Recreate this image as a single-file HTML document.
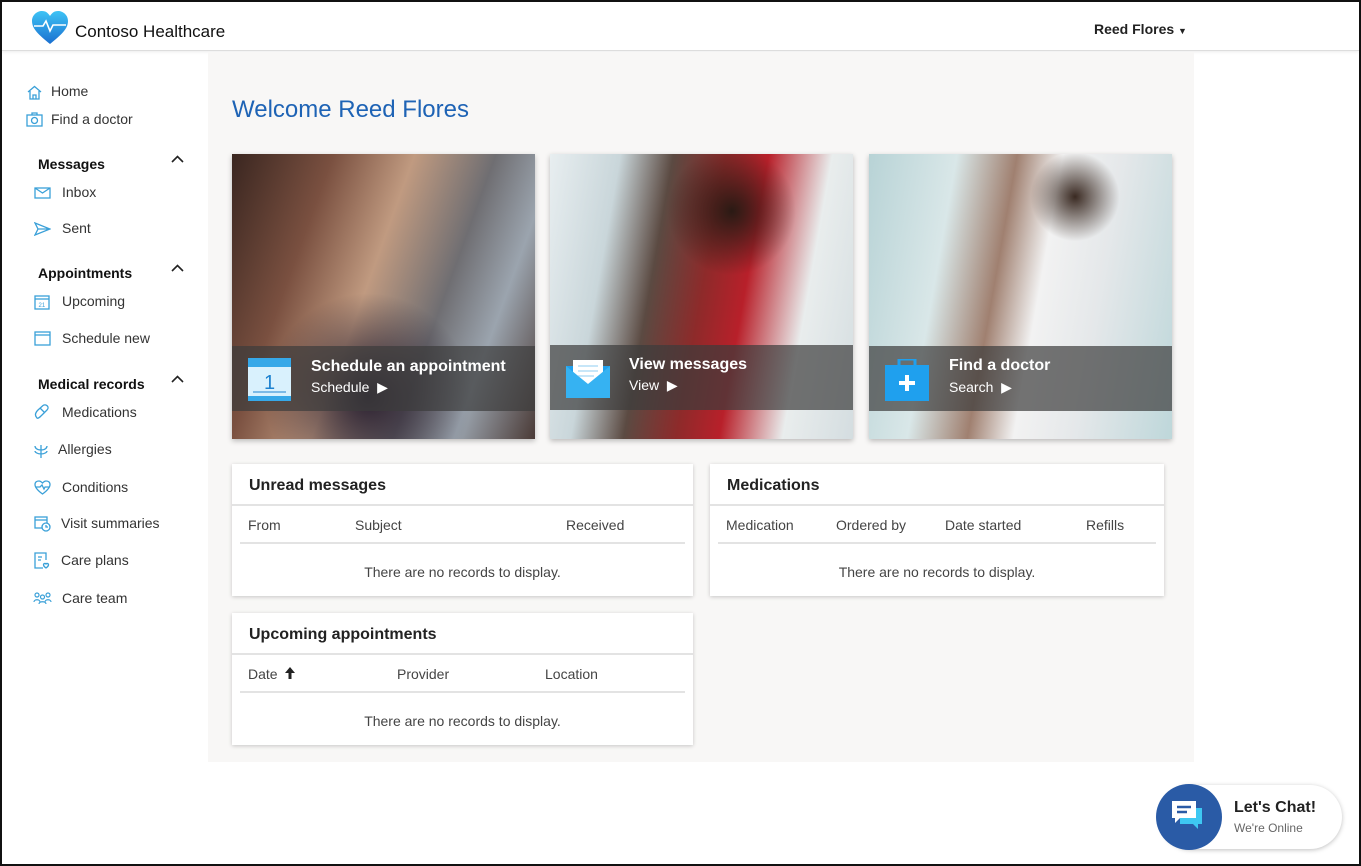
<!DOCTYPE html><html><head><meta charset="utf-8"><style>
*{box-sizing:border-box;margin:0;padding:0}
body{width:1361px;height:866px;overflow:hidden;background:#fff;font-family:"Liberation Sans",sans-serif;color:#222;position:relative}
.frame{position:absolute;inset:0;border:2px solid #111;pointer-events:none;z-index:9}
.hdr{position:absolute;left:2px;top:2px;right:2px;height:49px;border-bottom:1px solid #ddd;box-shadow:0 1px 3px rgba(0,0,0,.08)}
.logo{position:absolute;left:73px;top:20px;font-size:17px;color:#111}
.user{position:absolute;left:1092px;top:19px;font-size:14px;font-weight:bold;color:#222}
.main{position:absolute;left:208px;top:52px;width:986px;height:710px;background:#f8f7f6}
.nav{position:absolute;font-size:14px;color:#333}
.nav.h{font-weight:bold;color:#111}
.ic{position:absolute}
h1{position:absolute;left:232px;top:96px;font-size:24px;font-weight:normal;color:#1e63b5}
.tile{position:absolute;top:154px;width:303px;height:285px;box-shadow:0 2px 5px rgba(0,0,0,.25);overflow:hidden}
.ov{position:absolute;left:0;right:0;top:192px;height:65px;background:rgba(60,60,60,.7)}
.tt{position:absolute;color:#fff;font-size:16px;font-weight:bold}
.ts{position:absolute;color:#fff;font-size:14px}
.card{position:absolute;background:#fff;box-shadow:0 1px 4px rgba(0,0,0,.2)}
.card .t{position:absolute;left:17px;top:13px;font-size:16px;font-weight:bold;color:#222}
.card .l1{position:absolute;left:0;right:0;top:40px;border-top:2px solid #e3e3e3}
.card .l2{position:absolute;left:8px;right:8px;top:78px;border-top:2px solid #e3e3e3}
.card .c{position:absolute;top:53px;font-size:14px;color:#444}
.card .e{position:absolute;left:0;right:0;top:100px;text-align:center;font-size:14px;color:#444}
.car{position:absolute;left:171px}
</style></head><body>
<div class="frame"></div>
<div class="hdr">
<svg class="ic" style="left:29px;top:9px" width="38" height="34" viewBox="0 0 38 34"><defs><linearGradient id="g" x1="0" y1="0" x2="0" y2="1"><stop offset="0" stop-color="#3ec3f5"/><stop offset="1" stop-color="#1a6fd0"/></linearGradient></defs><path d="M19 33 C8 24 1 18 1 10 C1 4 6 0 11 0 C15 0 17 2 19 5 C21 2 23 0 27 0 C32 0 37 4 37 10 C37 18 30 24 19 33Z" fill="url(#g)"/><path d="M3 15 H12 L15 10 L19 20 L22 14 H35" stroke="#fff" stroke-width="1.6" fill="none"/></svg>
<div class="logo">Contoso Healthcare</div>
<div class="user">Reed Flores <span style="font-size:9px">▼</span></div>
</div>
<div class="main"></div>
<svg class="ic" style="left:27px;top:85px" width="15" height="15" viewBox="0 0 15 15" fill="none" stroke="#3aa0d8" stroke-width="1.3"><path d="M1 7 L7.5 1.5 L14 7 M3 6 V14 H12 V6 M6 14 V10 H9 V14"/></svg>
<div class="nav" style="left:51px;top:83px">Home</div>
<svg class="ic" style="left:26px;top:112px" width="17" height="15" viewBox="0 0 17 15" fill="none" stroke="#3aa0d8" stroke-width="1.3"><rect x="1" y="3" width="15" height="11"/><circle cx="8.5" cy="8.5" r="3"/><path d="M6 3 V1 H11 V3"/></svg>
<div class="nav" style="left:51px;top:111px">Find a doctor</div>
<div class="nav h" style="left:38px;top:156px">Messages</div><svg class="car" style="top:155px" width="13" height="8" viewBox="0 0 13 8" fill="none" stroke="#222" stroke-width="1.6"><path d="M1 7 L6.5 1.5 L12 7"/></svg>
<svg class="ic" style="left:34px;top:187px" width="17" height="12" viewBox="0 0 17 12" fill="none" stroke="#3aa0d8" stroke-width="1.3"><rect x="1" y="1" width="15" height="10"/><path d="M1 1 L8.5 6 L16 1"/></svg>
<div class="nav" style="left:62px;top:184px">Inbox</div>
<svg class="ic" style="left:34px;top:222px" width="17" height="14" viewBox="0 0 17 14" fill="none" stroke="#3aa0d8" stroke-width="1.3"><path d="M1 1 L16 7 L1 13 L4 7Z M4 7 H16"/></svg>
<div class="nav" style="left:62px;top:220px">Sent</div>
<div class="nav h" style="left:38px;top:265px">Appointments</div><svg class="car" style="top:264px" width="13" height="8" viewBox="0 0 13 8" fill="none" stroke="#222" stroke-width="1.6"><path d="M1 7 L6.5 1.5 L12 7"/></svg>
<svg class="ic" style="left:34px;top:294px" width="16" height="16" viewBox="0 0 16 16" fill="none" stroke="#3aa0d8" stroke-width="1.3"><rect x="1" y="2" width="14" height="13"/><path d="M1 5 H15"/><text x="4.5" y="13" font-size="6" fill="#3aa0d8" stroke="none" font-family="Liberation Sans">21</text></svg>
<div class="nav" style="left:62px;top:293px">Upcoming</div>
<svg class="ic" style="left:34px;top:331px" width="17" height="15" viewBox="0 0 17 15" fill="none" stroke="#3aa0d8" stroke-width="1.3"><rect x="1" y="1" width="15" height="13"/><path d="M1 4 H16"/></svg>
<div class="nav" style="left:62px;top:330px">Schedule new</div>
<div class="nav h" style="left:38px;top:376px">Medical records</div><svg class="car" style="top:375px" width="13" height="8" viewBox="0 0 13 8" fill="none" stroke="#222" stroke-width="1.6"><path d="M1 7 L6.5 1.5 L12 7"/></svg>
<svg class="ic" style="left:34px;top:404px" width="17" height="16" viewBox="0 0 17 16" fill="none" stroke="#3aa0d8" stroke-width="1.3"><path d="M3 14 C0 11 2 8 4 6 L9 1.5 C12 -0.5 16 3 13 6 L8 11 C6 13 4 15 3 14Z M6 4 L11 9"/></svg>
<div class="nav" style="left:62px;top:404px">Medications</div>
<svg class="ic" style="left:34px;top:442px" width="14" height="17" viewBox="0 0 14 17" fill="none" stroke="#3aa0d8" stroke-width="1.3"><path d="M7 16 V3 M7 8 C3 8 1 6 1 4 M7 8 C11 8 13 6 13 4 M7 12 C3 12 1 10 1 9 M7 12 C11 12 13 10 13 9"/></svg>
<div class="nav" style="left:58px;top:441px">Allergies</div>
<svg class="ic" style="left:34px;top:480px" width="17" height="15" viewBox="0 0 17 15" fill="none" stroke="#3aa0d8" stroke-width="1.3"><path d="M8.5 14 C3 10 1 7 1 4.5 C1 2 3 1 5 1 C6.5 1 7.5 2 8.5 3 C9.5 2 10.5 1 12 1 C14 1 16 2 16 4.5 C16 7 14 10 8.5 14Z M2 7 H6 L8 5 L10 9 L11 7 H15"/></svg>
<div class="nav" style="left:62px;top:479px">Conditions</div>
<svg class="ic" style="left:34px;top:515px" width="17" height="17" viewBox="0 0 17 17" fill="none" stroke="#3aa0d8" stroke-width="1.3"><rect x="1" y="2" width="12" height="11"/><path d="M1 5 H13"/><circle cx="12" cy="12" r="4" fill="#fff"/><path d="M12 10 V12 H14"/></svg>
<div class="nav" style="left:61px;top:515px">Visit summaries</div>
<svg class="ic" style="left:34px;top:552px" width="16" height="18" viewBox="0 0 16 18" fill="none" stroke="#3aa0d8" stroke-width="1.3"><path d="M9 16 H1 V1 H12 V8 M4 5 H8 M4 8 H7"/><path d="M12 16 C9 14 9 12 10.5 11.5 C11.3 11.3 12 12 12 12 C12 12 12.7 11.3 13.5 11.5 C15 12 15 14 12 16Z"/></svg>
<div class="nav" style="left:61px;top:552px">Care plans</div>
<svg class="ic" style="left:33px;top:592px" width="19" height="13" viewBox="0 0 19 13" fill="none" stroke="#3aa0d8" stroke-width="1.2"><circle cx="4" cy="3" r="2"/><circle cx="15" cy="3" r="2"/><circle cx="9.5" cy="5" r="2"/><path d="M1 10 C1 7 7 7 7 10 M12 10 C12 7 18 7 18 10 M6 12 C6 9 13 9 13 12"/></svg>
<div class="nav" style="left:62px;top:590px">Care team</div>

<h1>Welcome Reed Flores</h1>
<div class="tile" style="left:232px;background:radial-gradient(circle at 45% 85%,#2a2030 0,#2a203000 35%),linear-gradient(110deg,#3a2620 0%,#7a5040 25%,#c09a80 45%,#6f6e72 65%,#9ba4ae 80%,#4a3a36 100%)">
<div class="ov"></div>
<svg class="ic" style="left:16px;top:204px" width="43" height="43" viewBox="0 0 43 43"><rect width="43" height="43" fill="#d9f1fd"/><rect width="43" height="9" fill="#36a8e8"/><rect y="38" width="43" height="5" fill="#36a8e8"/><text x="16" y="31" font-size="20" fill="#1e82d0" font-family="Liberation Sans">1</text><path d="M5 34 H38" stroke="#1e82d0"/></svg>
<div class="tt" style="left:79px;top:204px">Schedule an appointment</div><div class="ts" style="left:79px;top:225px">Schedule &nbsp;▶</div></div>
<div class="tile" style="left:550px;background:radial-gradient(circle at 60% 20%,#2a1a14 0,#2a1a1400 22%),linear-gradient(100deg,#e8eef0 0%,#c9d6da 20%,#5b4a42 35%,#8e2a2a 50%,#b8202a 62%,#e9eded 80%,#d4dde0 100%)">
<div class="ov" style="top:191px"></div>
<svg class="ic" style="left:16px;top:204px" width="44" height="40" viewBox="0 0 44 40"><rect y="8" width="44" height="32" fill="#1fa0ee"/><rect x="7" y="2" width="30" height="24" fill="#fff"/><path d="M0 8 L22 26 L44 8 V40 H0Z" fill="#36b2f2"/><path d="M12 8 H32 M12 13 H32 M12 18 H28" stroke="#8fcdf0"/></svg>
<div class="tt" style="left:79px;top:202px">View messages</div><div class="ts" style="left:79px;top:223px">View &nbsp;▶</div></div>
<div class="tile" style="left:869px;background:radial-gradient(circle at 68% 15%,#3a2a22 0,#3a2a2200 14%),linear-gradient(100deg,#b8d3d6 0%,#d9e7e8 25%,#a08070 42%,#f2f2f2 55%,#e5e8ea 72%,#bed7da 100%)">
<div class="ov"></div>
<svg class="ic" style="left:16px;top:205px" width="44" height="42" viewBox="0 0 44 42"><rect x="14" y="0" width="16" height="8" fill="none" stroke="#1fa0ee" stroke-width="3"/><rect y="6" width="44" height="36" fill="#1fa0ee"/><path d="M22 16 V32 M14 24 H30" stroke="#fff" stroke-width="4"/></svg>
<div class="tt" style="left:80px;top:203px">Find a doctor</div><div class="ts" style="left:80px;top:225px">Search &nbsp;▶</div></div>

<div class="card" style="left:232px;top:464px;width:461px;height:132px"><div class="t">Unread messages</div><div class="l1"></div>
<div class="c" style="left:16px">From</div><div class="c" style="left:123px">Subject</div><div class="c" style="left:334px">Received</div><div class="l2"></div><div class="e">There are no records to display.</div></div>
<div class="card" style="left:710px;top:464px;width:454px;height:132px"><div class="t">Medications</div><div class="l1"></div>
<div class="c" style="left:16px">Medication</div><div class="c" style="left:126px">Ordered by</div><div class="c" style="left:235px">Date started</div><div class="c" style="left:376px">Refills</div><div class="l2"></div><div class="e">There are no records to display.</div></div>
<div class="card" style="left:232px;top:613px;width:461px;height:132px"><div class="t">Upcoming appointments</div><div class="l1"></div>
<div class="c" style="left:16px">Date</div><svg style="position:absolute;left:52px;top:53px" width="12" height="14" viewBox="0 0 12 14"><path d="M6 1 L11 7 H7.5 V13 H4.5 V7 H1Z" fill="#222"/></svg><div class="c" style="left:165px">Provider</div><div class="c" style="left:313px">Location</div><div class="l2"></div><div class="e">There are no records to display.</div></div>

<div style="position:absolute;left:1160px;top:785px;width:182px;height:64px;border-radius:32px;background:#fff;box-shadow:0 1px 5px rgba(0,0,0,.25)"></div>
<div style="position:absolute;left:1156px;top:784px;width:66px;height:66px;border-radius:50%;background:#2a5ba6"></div>
<svg class="ic" style="left:1170px;top:798px" width="36" height="36" viewBox="0 0 36 36"><path d="M10 10 H32 V26 H28 V31 L23 26 H10Z" fill="#3ec8f2"/><path d="M2 3 H26 V20 H10 L5 25 V20 H2Z" fill="#fff"/><path d="M7 9 H21 M7 14 H17" stroke="#2a5ba6" stroke-width="2.5"/></svg>
<div style="position:absolute;left:1234px;top:799px;font-size:16px;font-weight:bold;color:#222">Let's Chat!</div>
<div style="position:absolute;left:1234px;top:821px;font-size:12px;color:#666">We're Online</div>
</body></html>
